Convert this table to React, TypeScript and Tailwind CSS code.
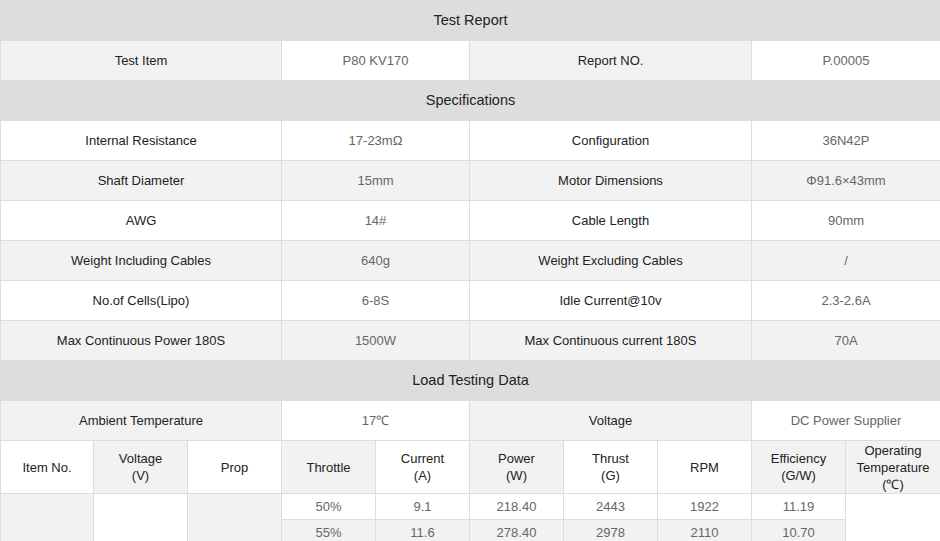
import React from "react";

const G = "bg-[#f2f2f2]";
const W = "bg-white";
const base = "border border-[#dddddd] text-center align-middle p-0";
const lab = "text-[#222]";
const val = "text-[#666]";

function Head({ children }: { children: React.ReactNode }) {
  return (
    <tr className="h-[40px]">
      <td colSpan={10} className={`${base} bg-[#dddddd] text-[14.5px] text-[#222]`}>
        {children}
      </td>
    </tr>
  );
}

function Row4({ a, b, c, d, bg }: { a: string; b: string; c: string; d: string; bg: string }) {
  return (
    <tr className="h-[40px]">
      <td colSpan={3} className={`${base} ${bg} ${lab}`}>{a}</td>
      <td colSpan={2} className={`${base} ${bg} ${val}`}>{b}</td>
      <td colSpan={3} className={`${base} ${bg} ${lab}`}>{c}</td>
      <td colSpan={2} className={`${base} ${bg} ${val}`}>{d}</td>
    </tr>
  );
}

const colW = ["w-[93px]", "w-[94px]", "w-[94px]", "w-[94px]", "w-[94px]", "w-[94px]", "w-[94px]", "w-[94px]", "w-[94px]", "w-[95px]"];

export default function App() {
  const specs = [
    ["Internal Resistance", "17-23mΩ", "Configuration", "36N42P"],
    ["Shaft Diameter", "15mm", "Motor Dimensions", "Φ91.6×43mm"],
    ["AWG", "14#", "Cable Length", "90mm"],
    ["Weight Including Cables", "640g", "Weight Excluding Cables", "/"],
    ["No.of Cells(Lipo)", "6-8S", "Idle Current@10v", "2.3-2.6A"],
    ["Max Continuous Power 180S", "1500W", "Max Continuous current 180S", "70A"],
  ];
  const hdr: [React.ReactNode, string][] = [
    ["Item No.", W],
    [<>Voltage<br />(V)</>, G],
    ["Prop", W],
    ["Throttle", G],
    [<>Current<br />(A)</>, W],
    [<>Power<br />(W)</>, G],
    [<>Thrust<br />(G)</>, W],
    ["RPM", W],
    [<>Efficiency<br />(G/W)</>, G],
    [<>Operating<br />Temperature<br />(℃)</>, G],
  ];
  const data = [
    ["50%", "9.1", "218.40", "2443", "1922", "11.19"],
    ["55%", "11.6", "278.40", "2978", "2110", "10.70"],
    ["60%", "14.3", "343.20", "3512", "2290", "10.23"],
  ];
  return (
    <div className="w-[940px] h-[541px] overflow-hidden bg-white" style={{ fontFamily: '"Liberation Sans", Arial, sans-serif' }}>
      <table className="w-[940px] table-fixed border-collapse text-[13px]">
        <colgroup>
          {colW.map((c, i) => (
            <col key={i} className={c} />
          ))}
        </colgroup>
        <tbody>
          <Head>Test Report</Head>
          <tr className="h-[40px]">
            <td colSpan={3} className={`${base} ${G} ${lab}`}>Test Item</td>
            <td colSpan={2} className={`${base} ${W} ${val}`}>P80 KV170</td>
            <td colSpan={3} className={`${base} ${G} ${lab}`}>Report NO.</td>
            <td colSpan={2} className={`${base} ${W} ${val}`}>P.00005</td>
          </tr>
          <Head>Specifications</Head>
          {specs.map((s, i) => (
            <Row4 key={i} a={s[0]} b={s[1]} c={s[2]} d={s[3]} bg={i % 2 === 0 ? W : G} />
          ))}
          <Head>Load Testing Data</Head>
          <tr className="h-[40px]">
            <td colSpan={3} className={`${base} ${G} ${lab}`}>Ambient Temperature</td>
            <td colSpan={2} className={`${base} ${W} ${val}`}>17℃</td>
            <td colSpan={3} className={`${base} ${G} ${lab}`}>Voltage</td>
            <td colSpan={2} className={`${base} ${W} ${val}`}>DC Power Supplier</td>
          </tr>
          <tr className="h-[53px]">
            {hdr.map(([t, bg], i) => (
              <td key={i} className={`${base} ${bg} ${lab} leading-[17px]`}>{t}</td>
            ))}
          </tr>
          {data.map((r, i) => (
            <tr key={i} className="h-[26px]">
              {i === 0 && (
                <>
                  <td rowSpan={3} className={`${base} ${G}`}></td>
                  <td rowSpan={3} className={`${base} ${W}`}></td>
                  <td rowSpan={3} className={`${base} ${G}`}></td>
                </>
              )}
              {r.map((v, j) => (
                <td key={j} className={`${base} ${i % 2 === 0 ? W : G} ${val}`}>{v}</td>
              ))}
              {i === 0 && <td rowSpan={3} className={`${base} ${W}`}></td>}
            </tr>
          ))}
        </tbody>
      </table>
    </div>
  );
}
